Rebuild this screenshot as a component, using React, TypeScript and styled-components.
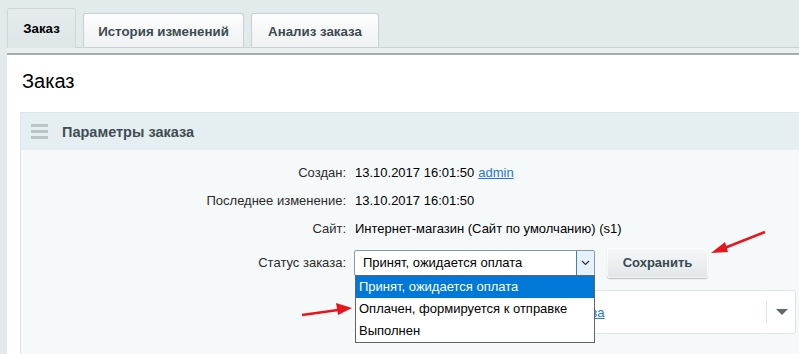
import React from "react";
import styled, { createGlobalStyle } from "styled-components";

const Global = createGlobalStyle`
  html, body { margin: 0; padding: 0; }
  body {
    background: #e2eaec;
    font-family: "Liberation Sans", Arial, sans-serif;
    font-size: 13px;
    color: #000;
    width: 799px;
    height: 354px;
    overflow: hidden;
  }
`;

const Page = styled.div`
  padding: 8px 0 0 7px;
  position: relative;
  height: 346px;
`;

const TabsRow = styled.div`
  display: flex;
  align-items: flex-end;
  gap: 7px;
  height: 39px;
`;

const Tab = styled.div<{ $active?: boolean; $w: number }>`
  box-sizing: border-box;
  width: ${(p) => p.$w}px;
  height: ${(p) => (p.$active ? 40 : 34)}px;
  display: flex;
  align-items: center;
  justify-content: center;
  border: 1px solid ${(p) => (p.$active ? "#cdd6d9" : "#c6cfd2")};
  border-bottom: none;
  border-radius: 3px 3px 0 0;
  background: ${(p) =>
    p.$active
      ? "linear-gradient(#e6ecee, #dfe6e8)"
      : "linear-gradient(#fdfefe, #eef2f3)"};
  font-weight: bold;
  font-size: 13.3px;
  color: ${(p) => (p.$active ? "#000" : "#3e4a52")};
  padding-top: ${(p) => (p.$active ? 0 : 1)}px;
  margin-bottom: ${(p) => (p.$active ? -1 : 0)}px;
  position: relative;
  z-index: ${(p) => (p.$active ? 2 : 1)};
`;

const TabStrip = styled.div`
  height: 5px;
  background: #e9eff1;
  border-top: 1px solid #c9d2d5;
  border-bottom: 2px solid #a3adb1;
`;

const Content = styled.div`
  background: #fff;
  padding: 0 0 0 13px;
  height: 300px;
`;

const Title = styled.h1`
  margin: 0;
  padding: 14px 0 0 2px;
  height: 43px;
  box-sizing: border-box;
  font-weight: normal;
  font-size: 20px;
  line-height: 24px;
  color: #000;
  margin-bottom: 14px;
`;

const Section = styled.div`
  border-left: 1px solid #dde6e9;
  border-top: 1px solid #dbe5e8;
`;

const SectionHeader = styled.div`
  height: 37px;
  background: #e5eff1;
  display: flex;
  align-items: center;
  padding-left: 10px;
  gap: 14px;
`;

const Burger = styled.div`
  width: 17px;
  display: flex;
  flex-direction: column;
  gap: 3px;
  span {
    display: block;
    height: 3px;
    background: #bac3c6;
  }
`;

const SectionTitle = styled.div`
  font-weight: bold;
  font-size: 14.5px;
  color: #414c53;
`;

const SectionBody = styled.div`
  background: #f5f9fa;
  padding-top: 9px;
  height: 200px;
  position: relative;
`;

const Grid = styled.div`
  display: grid;
  grid-template-columns: 325px 1fr;
  column-gap: 9px;
`;

const Label = styled.div<{ $h?: number }>`
  text-align: right;
  height: ${(p) => p.$h ?? 28}px;
  line-height: ${(p) => p.$h ?? 28}px;
  color: #2b2b2b;
`;

const Value = styled.div<{ $h?: number }>`
  height: ${(p) => p.$h ?? 28}px;
  line-height: ${(p) => p.$h ?? 28}px;
  color: #000;
  display: flex;
  align-items: center;
  gap: 4px;
`;

const Link = styled.a`
  color: #2675d7;
  text-decoration: underline;
`;

const SelectWrap = styled.div`
  position: relative;
  display: flex;
  align-items: center;
  gap: 12px;
  margin-left: -1px;
`;

const SelectBox = styled.div`
  box-sizing: border-box;
  width: 241px;
  height: 26px;
  border: 1px solid #8a97a3;
  border-radius: 2px;
  background: #fff;
  display: flex;
  align-items: center;
  padding-left: 8px;
  position: relative;
`;

const SelectText = styled.span`
  flex: 1;
  line-height: 24px;
`;

const ArrowBox = styled.div`
  box-sizing: border-box;
  width: 18px;
  height: 24px;
  background: #e5f1fb;
  border-left: 1px solid #3c7fb1;
  display: flex;
  align-items: center;
  justify-content: center;
`;

const Dropdown = styled.div`
  position: absolute;
  left: 1px;
  top: 26px;
  width: 240px;
  box-sizing: border-box;
  border: 1px solid #646464;
  background: #fff;
  z-index: 5;
`;

const Option = styled.div<{ $sel?: boolean }>`
  height: 22px;
  line-height: 22px;
  padding-left: 3px;
  background: ${(p) => (p.$sel ? "#0078d7" : "#fff")};
  color: ${(p) => (p.$sel ? "#fff" : "#000")};
`;

const SaveButton = styled.button`
  width: 101px;
  height: 30px;
  border: none;
  border-radius: 3px;
  background: linear-gradient(#f7f9f9, #e0e6e8);
  box-shadow: 0 1px 1px rgba(0, 0, 0, 0.25), inset 0 0 0 1px rgba(255, 255, 255, 0.6);
  font-family: "Liberation Sans", Arial, sans-serif;
  font-weight: bold;
  font-size: 13px;
  color: #3a4852;
  margin-top: -1px;
`;

const Card = styled.div`
  position: absolute;
  left: 334px;
  top: 140px;
  width: 441px;
  height: 44px;
  box-sizing: border-box;
  background: #fff;
  border: 1px solid #dfe6e8;
  border-radius: 2px;
  display: flex;
  align-items: center;
  padding-left: 105px;
`;

const CardLink = styled(Link)`
  flex: 1;
`;

const CardDivider = styled.div`
  width: 1px;
  height: 22px;
  background: #dfe6e8;
  margin-right: 9px;
`;

const Triangle = styled.div`
  width: 0;
  height: 0;
  border-left: 6px solid transparent;
  border-right: 6px solid transparent;
  border-top: 6px solid #5f6a6f;
  margin-right: 7px;
`;

const Arrows = styled.svg`
  position: absolute;
  left: 0;
  top: 0;
  pointer-events: none;
  z-index: 10;
`;

export default function App() {
  return (
    <>
      <Global />
      <Page>
        <TabsRow>
          <Tab $active $w={69}>Заказ</Tab>
          <Tab $w={161}>История изменений</Tab>
          <Tab $w={128}>Анализ заказа</Tab>
        </TabsRow>
        <TabStrip />
        <Content>
          <Title>Заказ</Title>
          <Section>
            <SectionHeader>
              <Burger>
                <span />
                <span />
                <span />
              </Burger>
              <SectionTitle>Параметры заказа</SectionTitle>
            </SectionHeader>
            <SectionBody>
              <Grid>
                <Label>Создан:</Label>
                <Value>
                  13.10.2017 16:01:50 <Link>admin</Link>
                </Value>
                <Label>Последнее изменение:</Label>
                <Value>13.10.2017 16:01:50</Value>
                <Label>Сайт:</Label>
                <Value>Интернет-магазин (Сайт по умолчанию) (s1)</Value>
                <Label $h={40}>Статус заказа:</Label>
                <Value $h={40}>
                  <SelectWrap>
                    <SelectBox>
                      <SelectText>Принят, ожидается оплата</SelectText>
                      <ArrowBox>
                        <svg width="9" height="6" viewBox="0 0 9 6">
                          <path d="M1 1l3.5 3.5L8 1" fill="none" stroke="#333" strokeWidth="1.2" />
                        </svg>
                      </ArrowBox>
                    </SelectBox>
                    <Dropdown>
                      <Option $sel>Принят, ожидается оплата</Option>
                      <Option>Оплачен, формируется к отправке</Option>
                      <Option>Выполнен</Option>
                    </Dropdown>
                    <SaveButton>Сохранить</SaveButton>
                  </SelectWrap>
                </Value>
              </Grid>
              <Card>
                <CardLink>Изменить статус заказа</CardLink>
                <CardDivider />
                <Triangle />
              </Card>
            </SectionBody>
          </Section>
        </Content>
        <Arrows width="799" height="354" viewBox="0 0 799 354">
          <line x1="765" y1="232" x2="722" y2="249" stroke="#e8161b" strokeWidth="2.5" />
          <polygon points="711,253 725,242 728,252" fill="#e8161b" />
          <line x1="302" y1="315" x2="338" y2="310" stroke="#e8161b" strokeWidth="2.5" />
          <polygon points="352,308 336,303 338,315" fill="#e8161b" />
        </Arrows>
      </Page>
    </>
  );
}
